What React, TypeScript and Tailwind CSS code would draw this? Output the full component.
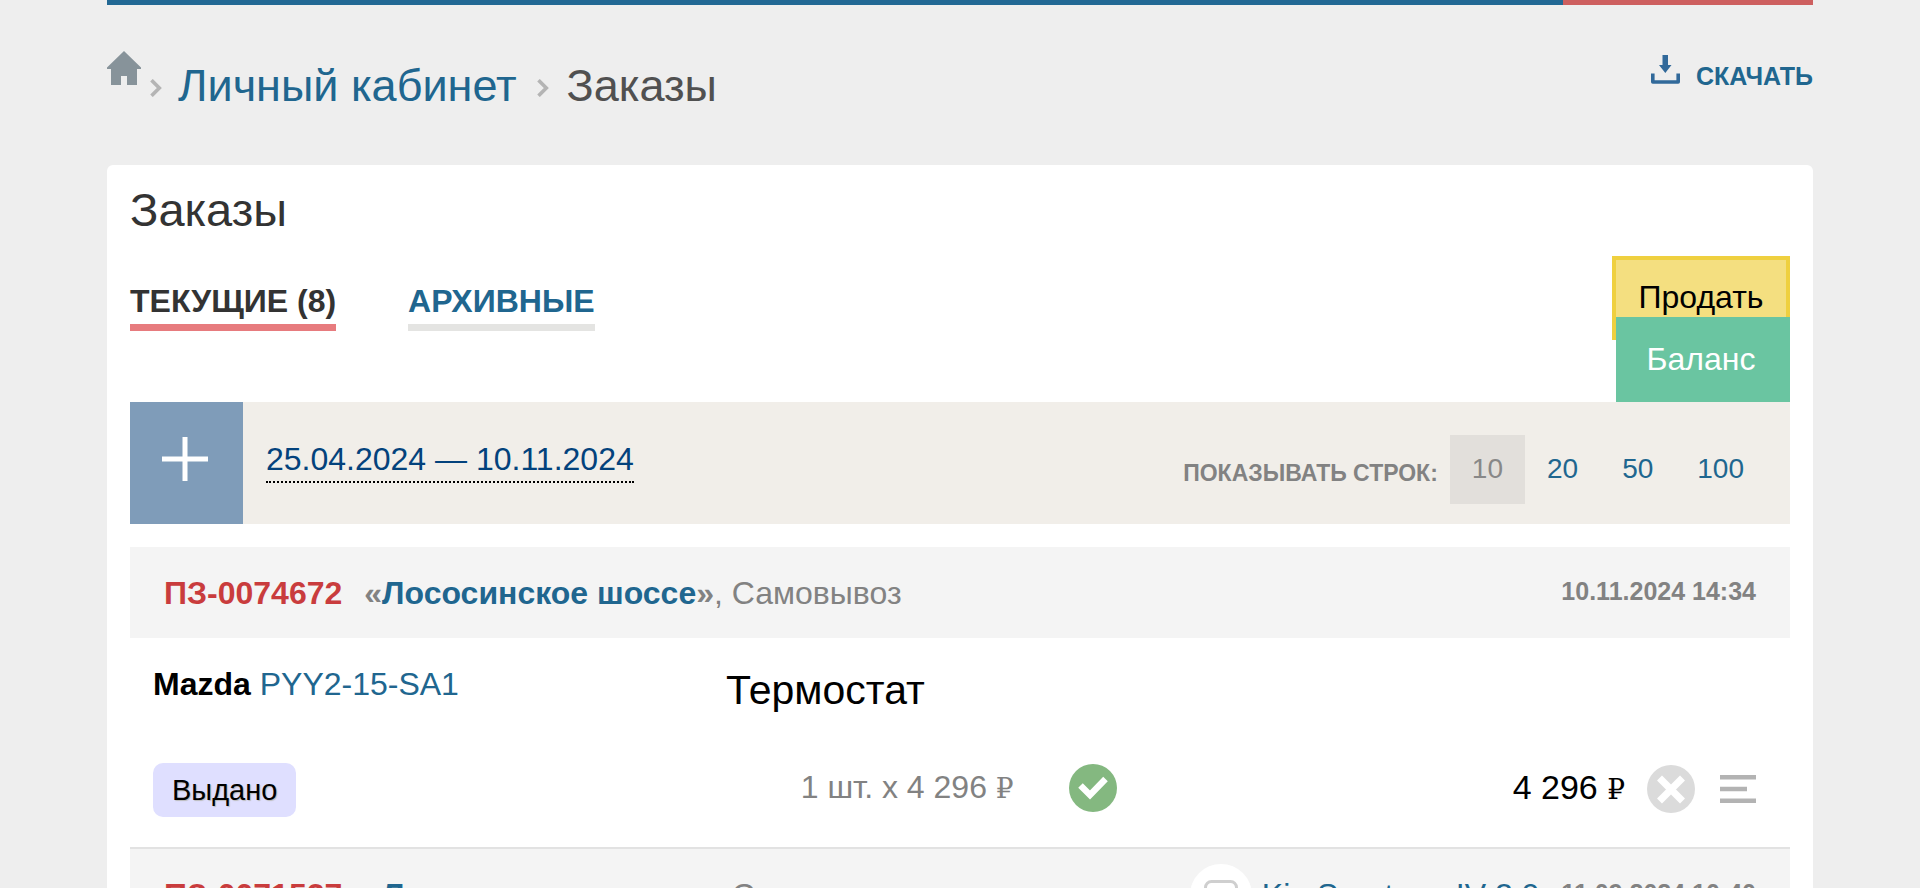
import type { ReactNode } from 'react';

const PAGE_SIZES = [10, 20, 50, 100];

function Chevron() {
  return (
    <svg width="12" height="18" viewBox="0 0 12 18" fill="none" stroke="#b4b4b4" strokeWidth="3.6" aria-hidden="true">
      <path d="M1.5 1.2L9.3 9L1.5 16.8" />
    </svg>
  );
}

function HomeIcon() {
  return (
    <svg width="34" height="34" viewBox="0 0 34 34" fill="#87939a" aria-hidden="true">
      <path d="M17 0L34 16.5V18H30V34H20V25H14V34H4V18H0V16.5Z" />
    </svg>
  );
}

function DownloadIcon() {
  return (
    <svg width="29" height="29" viewBox="0 0 29 29" aria-hidden="true">
      <path fill="#31699a" d="M11.5 0H17V10H20.5L14.3 18L8 10H11.5Z" />
      <path fill="none" stroke="#31699a" strokeWidth="3.6" strokeLinejoin="round" d="M1.8 18.5V27H27.2V18.5" />
    </svg>
  );
}

function CheckIcon() {
  return (
    <svg width="48" height="48" viewBox="0 0 48 48" role="img" aria-label="Выполнено">
      <circle cx="24" cy="24" r="24" fill="#84b880" />
      <path fill="none" stroke="#fff" strokeWidth="6.4" d="M11.5 21.5L21 31L36.5 15" />
    </svg>
  );
}

function CancelIcon() {
  return (
    <svg width="48" height="48" viewBox="0 0 48 48" aria-hidden="true">
      <circle cx="24" cy="24" r="24" fill="#dbdbdb" />
      <path stroke="#fff" strokeWidth="7" d="M12.5 13L35.5 36M35.5 13L12.5 36" />
    </svg>
  );
}

function MenuIcon() {
  return (
    <svg width="36" height="28" viewBox="0 0 36 28" fill="#b3b3b3" aria-hidden="true">
      <path d="M0 0H36V4.6H0ZM0 11.7H27V16.3H0ZM0 23.4H36V28H0Z" />
    </svg>
  );
}

function CarIcon() {
  return (
    <svg width="34" height="30" viewBox="0 0 34 30" fill="none" stroke="#cfcfcf" strokeWidth="3" aria-hidden="true">
      <rect x="1.5" y="1.5" width="31" height="27" rx="6" />
    </svg>
  );
}

function Ruble() {
  return <span className="font-['DejaVu_Serif',serif] text-[28px] leading-none">₽</span>;
}

type OrderHeaderProps = {
  number: string;
  place: string;
  delivery: string;
  date: string;
  children?: ReactNode;
};

function OrderHeader({ number, place, delivery, date, children }: OrderHeaderProps) {
  return (
    <header className="flex h-[91px] items-center bg-[#f4f4f4] px-[34px] text-[#828282]">
      <a href="#order" className="mr-[22px] font-bold text-[#c93c3d]">{number}</a>
      <p>
        <b>«<a href="#place" className="text-[#20668f]">{place}</a>»</b>, {delivery}
      </p>
      <div className="ml-auto flex items-center">
        {children}
        <time className="pb-1 text-[25px] font-bold">{date}</time>
      </div>
    </header>
  );
}

export default function App() {
  return (
    <div className="h-screen overflow-hidden bg-[#eeeeee] px-[107px] font-['Liberation_Sans',Arial,sans-serif] text-[32px] leading-[36px]">
      <div className="flex h-[5px]">
        <div className="grow bg-[#226894]" />
        <div className="w-[250px] bg-[#cd5f5f]" />
      </div>

      <div className="flex items-start justify-between pb-[49px]">
        <nav className="flex items-center pt-[46px] text-[45px] leading-[61px]" aria-label="Навигация">
          <a href="#home" aria-label="Главная" className="mr-[9px] self-start"><HomeIcon /></a>
          <span className="pt-2"><Chevron /></span>
          <a href="#account" className="ml-4 pt-1 text-[#20668f]">Личный кабинет</a>
          <span className="mr-[18px] ml-5 pt-2"><Chevron /></span>
          <span className="pt-1 text-[#505050]">Заказы</span>
        </nav>
        <a href="#download" className="flex gap-4 pt-[50px] text-[25px] font-bold text-[#20668f]">
          <DownloadIcon />
          <span className="pt-[3px]">СКАЧАТЬ</span>
        </a>
      </div>

      <main className="rounded-md bg-white px-[23px] pt-[17px]">
        <h1 className="text-[47px] leading-[56px] text-[#333]">Заказы</h1>

        <div className="flex h-[164px] items-start justify-between pt-[18px]">
          <div className="flex gap-[72px] pt-[27px] font-bold">
            <button type="button" className="border-b-[7px] border-[#e77b7e] pb-[5px] text-[#333]">ТЕКУЩИЕ (8)</button>
            <button type="button" className="border-b-[7px] border-[#e4e4e2] pb-[5px] text-[#20668f]">АРХИВНЫЕ</button>
          </div>
          <div className="flex flex-col items-end">
            <button type="button" className="h-[84px] w-[178px] border-4 border-[#efd03f] bg-[#f4df80] pb-0.5">Продать</button>
            <button type="button" className="relative -mt-[23px] h-[85px] w-[174px] bg-[#6ac5a1] pr-1 pb-0.5 text-white">Баланс</button>
          </div>
        </div>

        <div className="flex h-[122px] bg-[#f1eee9]">
          <button type="button" aria-label="Добавить" className="flex w-[113px] items-center justify-center bg-[#7f9cb9] pr-1 pb-2">
            <svg width="46" height="46" viewBox="0 0 46 46" stroke="#fff" strokeWidth="5" aria-hidden="true">
              <path d="M23 1V45M0 23H46" />
            </svg>
          </button>
          <div className="pt-[39px] pl-[23px]">
            <button type="button" className="border-b-2 border-dotted border-black pb-1 text-[#03427c]">25.04.2024 — 10.11.2024</button>
          </div>
          <div className="ml-auto flex items-center pt-3 pr-6">
            <span className="pt-2 pr-3 text-[23px] font-bold text-[#828282]">ПОКАЗЫВАТЬ СТРОК:</span>
            {PAGE_SIZES.map((size) => (
              <button
                key={size}
                type="button"
                className={size === 10 ? 'h-[69px] bg-[#e2dfdb] px-[22px] text-[28px] text-[#888]' : 'h-[69px] px-[22px] text-[28px] text-[#20668f]'}
              >
                {size}
              </button>
            ))}
          </div>
        </div>

        <article className="mt-[23px]">
          <OrderHeader number="ПЗ-0074672" place="Лососинское шоссе" delivery="Самовывоз" date="10.11.2024 14:34" />
          <div className="flex px-[23px] pt-[28px]">
            <p className="w-[573px]">
              <b>Mazda</b> <a href="#part" className="text-[#20668f]">PYY2-15-SA1</a>
            </p>
            <h2 className="pt-0.5 pb-0.5 text-[41px] leading-[44px]">Термостат</h2>
          </div>
          <div className="flex items-center px-[23px] pt-[49px] pb-[30px]">
            <span className="flex h-[54px] items-center rounded-[10px] bg-[#dfdfff] px-[19px] text-[29px] [text-shadow:1px_1px_1px_#bbb]">Выдано</span>
            <p className="ml-auto pb-[6px] text-[#828282]">1 шт. x 4 296 <Ruble /></p>
            <span className="ml-[55px] pb-1"><CheckIcon /></span>
            <p className="ml-[396px] pb-[6px] text-[34px]">4 296 <Ruble /></p>
            <button type="button" aria-label="Отменить" className="ml-[22px] pb-0.5"><CancelIcon /></button>
            <button type="button" aria-label="Меню" className="mr-[11px] ml-[25px] pb-0.5"><MenuIcon /></button>
          </div>
        </article>

        <article className="border-t-2 border-[#e2e2e2]">
          <OrderHeader number="ПЗ-0071527" place="Лососинское шоссе" delivery="Самовывоз" date="11.09.2024 10:40">
            <span className="mr-[10px] flex size-[62px] items-center justify-center rounded-full bg-white"><CarIcon /></span>
            <a href="#car" className="mr-[22px] text-[#20668f]">Kia Sportage IV 2.0</a>
          </OrderHeader>
        </article>
      </main>
    </div>
  );
}
